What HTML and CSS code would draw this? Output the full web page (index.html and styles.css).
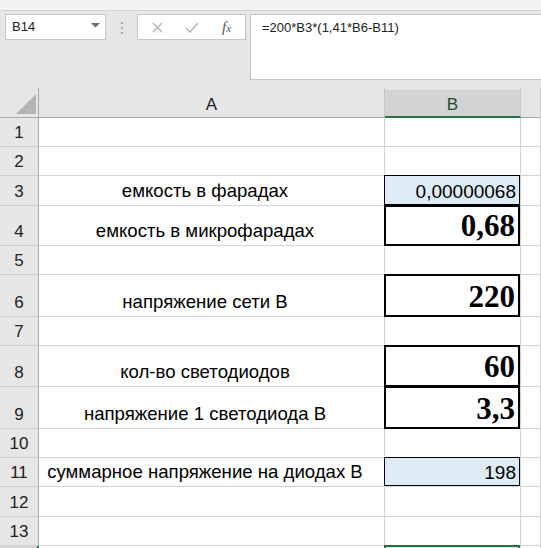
FILE: index.html
```html
<!DOCTYPE html>
<html lang="ru">
<head>
<meta charset="utf-8">
<title>Excel</title>
<link rel="stylesheet" href="styles.css">
</head>
<body>
<div class="ribbon-edge"></div>
<div class="fbar">
  <div class="namebox">
    <span class="nb-text">B14</span>
    <svg class="caret" width="9" height="5" viewBox="0 0 9 5"><polygon points="0,0 9,0 4.5,4.5" fill="#6d6d6d"/></svg>
  </div>
  <div class="grip"><i></i><i></i><i></i></div>
  <div class="fxbox">
    <svg class="ico" width="11" height="11" viewBox="0 0 11 11"><path d="M1 1 L10 10 M10 1 L1 10" stroke="#b3b3b3" stroke-width="1.3" fill="none"/></svg>
    <svg class="ico" width="14" height="11" viewBox="0 0 14 11"><path d="M1 6 L5 10 L13 1" stroke="#b3b3b3" stroke-width="1.4" fill="none"/></svg>
    <span class="fx">f<span class="fx-x">x</span></span>
  </div>
  <div class="formula">=200*B3*(1,41*B6-B11)</div>
</div>

<div class="sheet">
  <div class="hd corner"><svg width="20" height="20" viewBox="0 0 20 20"><polygon points="20,0 20,20 0,20" fill="#b4b4b4"/></svg></div>
  <div class="hd col">A</div>
  <div class="hd col sel">B</div>
  <div class="hd col"></div>

  <div class="rh">1</div><div class="c a"></div><div class="c b"></div><div class="c"></div>
  <div class="rh">2</div><div class="c a"></div><div class="c b"></div><div class="c"></div>
  <div class="rh">3</div><div class="c a">емкость в фарадах</div><div class="c b num blue">0,00000068</div><div class="c"></div>
  <div class="rh">4</div><div class="c a">емкость в микрофарадах</div><div class="c b big boxed">0,68</div><div class="c"></div>
  <div class="rh">5</div><div class="c a"></div><div class="c b"></div><div class="c"></div>
  <div class="rh">6</div><div class="c a">напряжение сети В</div><div class="c b big boxed">220</div><div class="c"></div>
  <div class="rh">7</div><div class="c a"></div><div class="c b"></div><div class="c"></div>
  <div class="rh">8</div><div class="c a">кол-во светодиодов</div><div class="c b big boxed">60</div><div class="c"></div>
  <div class="rh">9</div><div class="c a">напряжение 1 светодиода В</div><div class="c b big boxed">3,3</div><div class="c"></div>
  <div class="rh">10</div><div class="c a"></div><div class="c b"></div><div class="c"></div>
  <div class="rh">11</div><div class="c a">суммарное напряжение на диодах В</div><div class="c b num blue">198</div><div class="c"></div>
  <div class="rh">12</div><div class="c a"></div><div class="c b"></div><div class="c"></div>
  <div class="rh">13</div><div class="c a"></div><div class="c b"></div><div class="c"></div>
  <div class="rh rsel"></div><div class="c a last"></div><div class="c b active"></div><div class="c last"></div>
</div>
</body>
</html>
```

FILE: styles.css
```css
* { box-sizing: border-box; }
html, body {
  margin: 0;
  padding: 0;
  width: 541px;
  height: 548px;
  overflow: hidden;
  background: #e6e6e6;
  font-family: "Liberation Sans", Arial, sans-serif;
  color: #000;
}

.ribbon-edge {
  height: 11px;
  background: #f1f1f1;
  border-bottom: 1px solid #d4d4d4;
}

.fbar {
  height: 77px;
  display: flex;
  align-items: flex-start;
  padding: 3px 0 0 5px;
}

.namebox {
  width: 101px;
  height: 26px;
  background: #fff;
  border: 1px solid #c6c6c6;
  display: flex;
  align-items: center;
  justify-content: space-between;
  padding: 0 5px 1px 6px;
}
.nb-text {
  font-size: 13px;
  color: #222;
}
.caret { margin-bottom: 2px; }

.grip {
  width: 3px;
  margin: 8px 13px 0 15px;
  display: flex;
  flex-direction: column;
  gap: 3px;
}
.grip i {
  display: block;
  width: 2px;
  height: 2px;
  background: #a8a8a8;
}

.fxbox {
  width: 109px;
  height: 26px;
  background: #fff;
  border: 1px solid #c6c6c6;
  display: flex;
  align-items: center;
  padding: 0 0 0 14px;
  gap: 22px;
}
.fx {
  font-family: "Liberation Serif", "Times New Roman", serif;
  font-style: italic;
  font-size: 15px;
  color: #555;
  margin-left: 1px;
}
.fx-x { font-size: 11px; }

.formula {
  flex: 1;
  margin-left: 4px;
  height: 66px;
  background: #fff;
  border: 1px solid #c6c6c6;
  border-right: none;
  padding: 5px 0 0 11px;
  font-size: 13px;
  color: #222;
}

.sheet {
  display: grid;
  grid-template-columns: 39px 346px 136px 1fr;
  grid-template-rows: 30px 29px 29px 30px 40px 29px 42px 29px 41px 42px 29px 29px 30px 29px 2px;
  background: #fff;
}

.hd {
  background: #e6e6e6;
  border-right: 1px solid #c8c8c8;
  border-bottom: 1px solid #a9a9a9;
  font-size: 17px;
  display: flex;
  align-items: flex-end;
  justify-content: center;
  padding-bottom: 4px;
  line-height: 1;
  color: #222;
}
.hd.corner {
  justify-content: flex-end;
  padding: 0 2px 3px 0;
  border-right-color: #a9a9a9;
}
.hd.sel {
  background: linear-gradient(#e6e6e6 2px, #d3d3d3 2px);
  border-bottom: 2px solid #217346;
  color: #1f4f2e;
  padding-bottom: 3px;
}

.rh {
  background: #e6e6e6;
  border-right: 1px solid #ababab;
  border-bottom: 1px solid #cfcfcf;
  font-size: 17px;
  line-height: 1;
  display: flex;
  align-items: flex-end;
  justify-content: center;
  padding-bottom: 5px;
  color: #222;
}
.rh.rsel {
  background: #d3d3d3;
  border-right: 2px solid #217346;
  border-bottom: none;
}

.c {
  border-right: 1px solid #d4d4d4;
  border-bottom: 1px solid #d4d4d4;
  display: flex;
  align-items: flex-end;
  line-height: 1;
  position: relative;
}
.c.last { border-bottom: none; }
.c.a {
  justify-content: center;
  font-size: 18.6px;
  padding: 0 13px 4px 0;
}
.c.num {
  justify-content: flex-end;
  font-size: 19px;
  padding: 0 4px 4px 0;
}
.c.blue { background: #ddebf7; }
.c.blue::after {
  content: "";
  position: absolute;
  top: -1px;
  left: -1px;
  right: 0;
  bottom: 0;
  border: 1px solid #000;
}
.c.big {
  justify-content: flex-end;
  font-family: "Liberation Serif", "Times New Roman", serif;
  font-weight: bold;
  font-size: 31px;
  padding: 0 5px 4px 0;
}
.c.boxed::after {
  content: "";
  position: absolute;
  top: -1px;
  left: -1px;
  right: 0;
  bottom: -1px;
  border: 2px solid #000;
}
.c.active {
  background: #e3efe8;
  border-bottom: none;
}
.c.active::after {
  content: "";
  position: absolute;
  top: -1px;
  left: -1px;
  right: 0;
  bottom: -4px;
  border: 2px solid #217346;
}
```
